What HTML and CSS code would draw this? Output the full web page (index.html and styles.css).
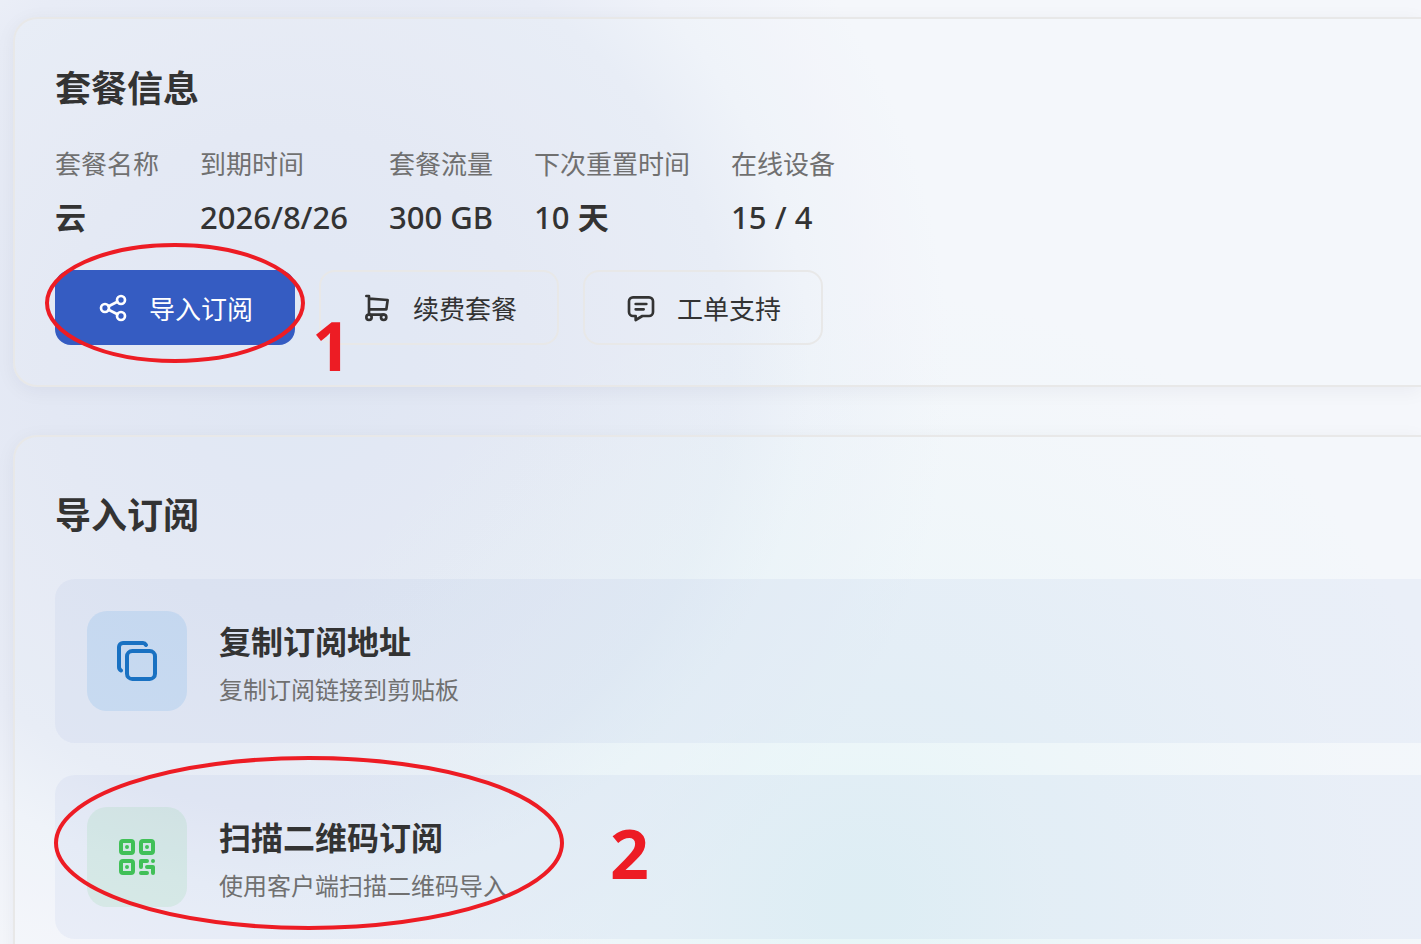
FILE: index.html
```html
<!DOCTYPE html>
<html lang="zh-CN">
<head>
  <meta charset="UTF-8">
  <title>套餐信息</title>
  <link rel="stylesheet" href="styles.css">
</head>
<body>
  <main class="page">
    <!-- 套餐信息 -->
    <section class="card">
      <h2 class="card-title">套餐信息</h2>
      <dl class="plan">
        <div><dt>套餐名称</dt><dd><b>云</b></dd></div>
        <div><dt>到期时间</dt><dd>2026/8/26</dd></div>
        <div><dt>套餐流量</dt><dd>300 GB</dd></div>
        <div><dt>下次重置时间</dt><dd>10 <b>天</b></dd></div>
        <div><dt>在线设备</dt><dd>15 / 4</dd></div>
      </dl>
      <div class="actions">
        <button type="button" class="btn btn-primary">
          <svg class="icon" viewBox="0 0 24 24"><circle cx="6" cy="12" r="3"/><circle cx="18" cy="6" r="3"/><circle cx="18" cy="18" r="3"/><path d="M8.7 10.7l6.6-3.4M8.7 13.3l6.6 3.4"/></svg>
          导入订阅
        </button>
        <button type="button" class="btn">
          <svg class="icon" viewBox="0 0 24 24"><circle cx="6" cy="19" r="2"/><circle cx="17" cy="19" r="2"/><path d="M17 17H6V3H4M6 5l14 1-1 7H6"/></svg>
          续费套餐
        </button>
        <button type="button" class="btn">
          <svg class="icon" viewBox="0 0 24 24"><path d="M8 9h8M8 13h6M18 4a3 3 0 0 1 3 3v8a3 3 0 0 1-3 3h-5l-5 3v-3H6a3 3 0 0 1-3-3V7a3 3 0 0 1 3-3z"/></svg>
          工单支持
        </button>
      </div>
    </section>

    <!-- 导入订阅 -->
    <section class="card">
      <h2 class="card-title card-title-tall">导入订阅</h2>
      <div class="options">
        <button type="button" class="option">
          <span class="option-icon blue">
            <svg class="icon icon-lg" viewBox="0 0 24 24"><rect x="7" y="7" width="14" height="14" rx="2.667"/><path d="M4.012 16.737A2 2 0 0 1 3 15V5c0-1.1.9-2 2-2h10c.75 0 1.158.385 1.5 1"/></svg>
          </span>
          <span class="option-text">
            <span class="option-title">复制订阅地址</span>
            <span class="option-desc">复制订阅链接到剪贴板</span>
          </span>
        </button>
        <button type="button" class="option">
          <span class="option-icon green">
            <svg class="icon icon-lg" viewBox="0 0 24 24"><rect x="4" y="4" width="6" height="6" rx="1"/><rect x="14" y="4" width="6" height="6" rx="1"/><rect x="4" y="14" width="6" height="6" rx="1"/><path d="M7 17v.01M17 7v.01M7 7v.01M14 14h3M20 14v.01M14 14v3M14 20h3M17 17h3M20 17v3"/></svg>
          </span>
          <span class="option-text">
            <span class="option-title">扫描二维码订阅</span>
            <span class="option-desc">使用客户端扫描二维码导入</span>
          </span>
        </button>
      </div>
    </section>

    <!-- 步骤标注 -->
    <svg class="marks" width="700" height="944" viewBox="0 0 700 944">
      <ellipse cx="175" cy="303" rx="128" ry="58"/>
      <text x="312" y="371">1</text>
      <ellipse cx="309" cy="843" rx="253" ry="85"/>
      <text x="610" y="879">2</text>
    </svg>
  </main>
</body>
</html>
```
FILE: styles.css
```css
* {
  box-sizing: border-box;
}
body {
  margin: 0;
  font-family: "Open Sans", "Noto Sans CJK SC", sans-serif;
  color: #333333;
}
.page {
  position: relative;
  height: 100vh;
  overflow: hidden;
  padding: 17px 0 0 13px;
  display: flex;
  flex-direction: column;
  gap: 48px;
  background:
    radial-gradient(circle at 860px 910px, rgba(226, 245, 246, 0.8), rgba(230, 245, 247, 0.5) 240px, rgba(238, 246, 249, 0) 620px),
    radial-gradient(circle at 290px 370px, #dfe6f3, #e3e8f4 240px, #e8ecf6 440px, #eff2f9 520px, #f5f7fb 660px);
}
.card {
  flex-shrink: 0;
  padding: 40px 0 40px 40px;
  border: 2px solid #e8e8e8;
  border-right: 0;
  border-radius: 24px 0 0 24px;
  background-color: rgba(248, 250, 255, 0.08);
  box-shadow: 0 4px 20px rgba(0, 20, 60, 0.05);
}
.card-title {
  margin: 0 0 24px;
  font-size: 36px;
  line-height: 60px;
  font-weight: 700;
}
.card-title-tall {
  line-height: 78px;
}

/* 套餐数据 */
.plan {
  display: flex;
  gap: 41px;
  margin: 0 0 29px;
}
.plan dt {
  font-size: 26px;
  line-height: 42px;
  color: #707070;
}
.plan dd {
  margin: 8px 0 0;
  font-family: "Noto Sans", "Noto Sans CJK SC", sans-serif;
  font-size: 31px;
  line-height: 48px;
  font-weight: 500;
}
.plan b {
  font-weight: 700;
}

.actions {
  display: flex;
  gap: 24px;
}
.btn {
  display: flex;
  align-items: center;
  justify-content: center;
  gap: 20px;
  width: 240px;
  height: 75px;
  padding: 0;
  border: 2px solid #e8e8e8;
  border-radius: 16px;
  background: none;
  color: #333333;
  font: inherit;
  font-size: 26px;
  cursor: pointer;
}
.btn-primary {
  border-color: #355cc2;
  background-color: #355cc2;
  color: #ffffff;
}
.icon {
  width: 32px;
  height: 32px;
  fill: none;
  stroke: currentColor;
  stroke-width: 2;
  stroke-linecap: round;
  stroke-linejoin: round;
}
.icon-lg {
  width: 48px;
  height: 48px;
}

/* 导入方式 */
.options {
  display: flex;
  flex-direction: column;
  gap: 32px;
}
.option {
  display: flex;
  align-items: center;
  gap: 32px;
  padding: 32px;
  border: 0;
  border-radius: 20px 0 0 20px;
  background-color: rgba(50, 90, 190, 0.05);
  color: #333333;
  font: inherit;
  text-align: left;
  cursor: pointer;
}
.option-icon {
  display: flex;
  align-items: center;
  justify-content: center;
  width: 100px;
  height: 100px;
  border-radius: 20px;
}
.blue {
  background-color: rgba(34, 139, 230, 0.12);
  color: #1971c2;
}
.green {
  background-color: rgba(64, 192, 87, 0.1);
  color: #40c057;
}
.option-text {
  display: flex;
  flex-direction: column;
  gap: 4px;
  padding-top: 4px;
}
.option-title {
  font-size: 32px;
  line-height: 50px;
  font-weight: 700;
}
.option-desc {
  font-size: 24px;
  line-height: 38px;
  color: #707070;
}

/* 红色标注 */
.marks {
  position: absolute;
  top: 0;
  left: 0;
  pointer-events: none;
}
.marks ellipse {
  fill: none;
  stroke: #ed1c24;
  stroke-width: 4;
}
.marks text {
  fill: #ed1c24;
  font-size: 68px;
  font-weight: 700;
}
```
